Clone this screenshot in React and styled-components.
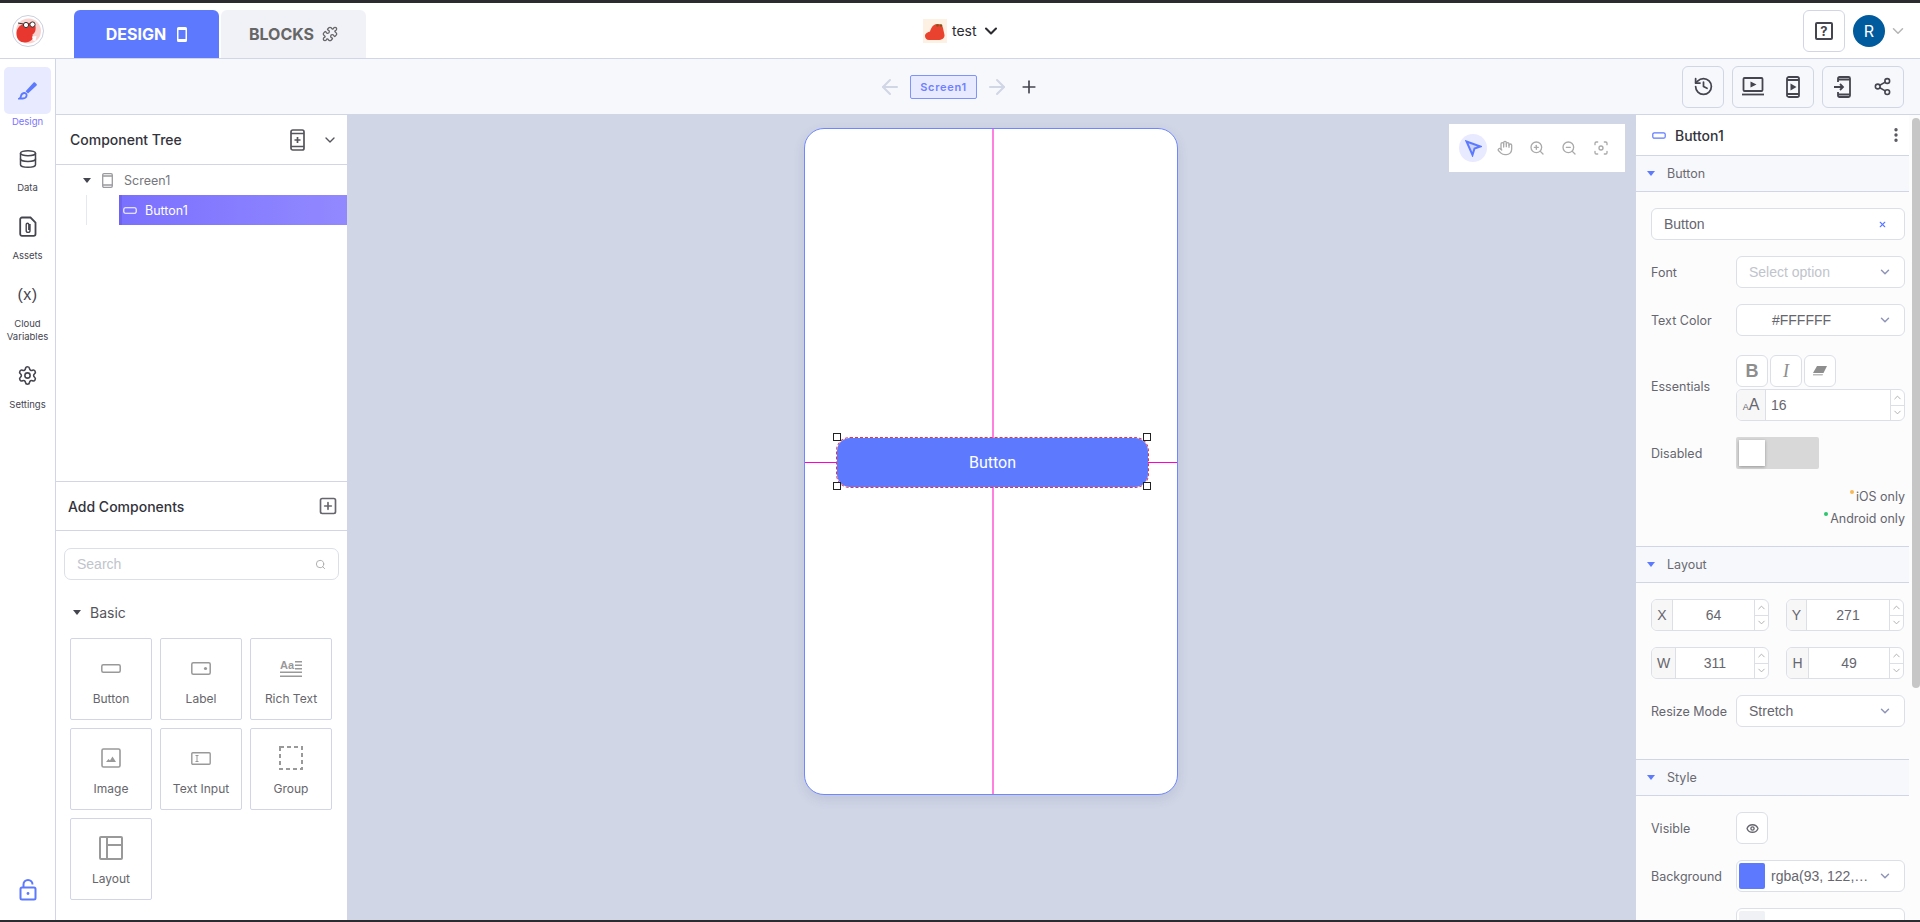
import React from 'react';
import styled, {createGlobalStyle} from 'styled-components';
import {
    ArrowLeft, ArrowRight, ChevronDown, ChevronUp, Database, EllipsisVertical, Eye, Focus, Hand, History,
    Plus, Puzzle, Search, Settings, Share2, SquarePlus, X, ZoomIn, ZoomOut
} from 'lucide-react';

const GlobalStyle = createGlobalStyle`
  html, body { margin: 0; padding: 0; height: 100%; overflow: hidden; background: #fff; }
  * { box-sizing: border-box; }
  body { font-family: "Inter", "Liberation Sans", sans-serif; color: #3c3c46; }
`;

/* little drawings that the icon packages don't have */
const BrushIcon = () => (
    <svg width="20" height="20" viewBox="0 0 20 20" fill="#5d7aff">
        <path d="M17 1.500l1.600 1.600c.4.4.4 1 0 1.400L10 12.600 7.600 10.200 15.600 1.500c.4-.4 1-.4 1.400 0z"/>
        <path d="M6 12c1.500-.2 2.800 1 2.600 2.500-.2 1.800-2 3-3.800 3H1.500c1-.6 1.300-1.400 1.500-2.500.3-1.600 1.500-2.800 3-3z" fill="none" stroke="#5d7aff" strokeWidth="1.800"/>
    </svg>
);
const AssetIcon = () => (
    <svg width="18" height="21" viewBox="0 0 18 21" fill="none" stroke="#45454f" strokeWidth="1.800">
        <path d="M3 1.500h8.500l5 5V18a1.800 1.800 0 0 1-1.800 1.800H3A1.800 1.800 0 0 1 1.200 18V3.300A1.800 1.800 0 0 1 3 1.500z"/>
        <path d="M11 8v6.500a1.900 1.900 0 0 1-3.800 0V8.500a1.300 1.300 0 0 1 2.600 0V14" strokeWidth="1.400"/>
    </svg>
);
const LockIcon = () => (
    <svg width="18" height="22" viewBox="0 0 18 22" fill="none" stroke="#5d7aff" strokeWidth="2">
        <rect x="1.500" y="8.500" width="15" height="12" rx="1.500"/>
        <path d="M4.500 8V5.500a4.500 4.500 0 0 1 9 0"/>
        <circle cx="9" cy="14.500" r="1.400" fill="#5d7aff" stroke="none"/>
    </svg>
);
const Logo = () => (
    <svg width="32" height="32" viewBox="0 0 32 32">
        <circle cx="16" cy="16" r="15.500" fill="#fff" stroke="#c9cfe0"/>
        <circle cx="16.500" cy="16" r="12.500" fill="#f8d3d0"/>
        <path d="M4.500 19c0-6 3.500-9 7-10 3-1 6.500-1.500 10-1 2 1.500 2.500 4 2 7-.4 2-1.500 3.500-3 4.500l.5 4c-2 2.500-5 4-8 4-5 0-8.500-3.500-8.500-8.500z" fill="#e8372f"/>
        <circle cx="14" cy="10" r="2.600" fill="#fff" stroke="#333" strokeWidth="1"/>
        <circle cx="20.500" cy="9.500" r="2.600" fill="#fff" stroke="#333" strokeWidth="1"/>
        <path d="M6 8l5.500 1" stroke="#333" strokeWidth="1"/>
        <path d="M20 21.500l4.500-.5-1 5-2.500-.5z" fill="#fff"/>
    </svg>
);
const ProjectLogo = () => (
    <svg width="24" height="24" viewBox="0 0 24 24">
        <rect width="24" height="24" fill="#fdf1e4"/>
        <path d="M2 17c0-2.500 3-4 5-4.500 1-3 2.500-7 7-7.500 3.500-.3 5.500 1 6 4l1.500 7c.3 3-2.500 5-6.500 5H6c-2.500 0-4-2-4-4z" fill="#e9432f"/>
        <circle cx="14.500" cy="6.500" r="1.300" fill="#7a5a1c"/>
        <circle cx="18" cy="6.500" r="1.300" fill="#7a5a1c"/>
    </svg>
);
const DesignTabIcon = () => (
    <svg width="10" height="15" viewBox="0 0 10 15">
        <path fillRule="evenodd" fill="#fff" d="M1.500 0h7A1.500 1.500 0 0 1 10 1.500v12A1.500 1.500 0 0 1 8.500 15h-7A1.500 1.500 0 0 1 0 13.500v-12A1.500 1.500 0 0 1 1.500 0zM1.500 3v9h7V3z"/>
    </svg>
);
const PhoneOutline = ({color = '#9a9a9f'}) => (
    <svg width="11" height="15" viewBox="0 0 11 15" fill="none" stroke={color} strokeWidth="1.300">
        <rect x=".7" y=".7" width="9.600" height="13.600" rx="1.300"/>
        <path d="M1 3h9M1 12h9"/>
    </svg>
);
const PhonePlus = () => (
    <svg width="15" height="22" viewBox="0 0 15 22" fill="none" stroke="#55555c" strokeWidth="1.700">
        <rect x="1" y="1" width="13" height="20" rx="1.800"/>
        <path d="M1 4.500h13M1 17.500h13M7.500 8v6M4.500 11h6"/>
    </svg>
);
const ButtonGlyph = ({color = '#999', w = 20, h = 9, stroke = 1.500}) => (
    <svg width={w} height={h} viewBox={`0 0 ${w} ${h}`} fill="none" stroke={color} strokeWidth={stroke}>
        <rect x=".8" y=".8" width={w - 1.600} height={h - 1.600} rx="1.500"/>
    </svg>
);
const LabelGlyph = () => (
    <svg width="20" height="13" viewBox="0 0 20 13" fill="none" stroke="#999" strokeWidth="1.500">
        <rect x=".8" y=".8" width="18.400" height="11.400" rx="1.500"/>
        <circle cx="14.500" cy="6.500" r="1.600" fill="#999" stroke="none"/>
    </svg>
);
const RichTextGlyph = () => (
    <svg width="22" height="19" viewBox="0 0 22 19" fill="#999">
        <text x="0" y="10" fontFamily="Liberation Sans" fontSize="11" fontWeight="700">Aa</text>
        <path d="M15 2h7v1.500h-7zM15 5.500h7V7h-7zM15 9h7v1.500h-7zM0 12.500h22V14H0zM0 16.500h22V18H0z"/>
    </svg>
);
const ImageGlyph = () => (
    <svg width="20" height="20" viewBox="0 0 20 20" fill="none" stroke="#999" strokeWidth="1.600">
        <rect x="1" y="1" width="18" height="18" rx="1.500"/>
        <path d="M5 14l2.500-3 1.500 1.500 2.500-4 3.500 5.500z" fill="#999" stroke="none"/>
    </svg>
);
const InputGlyph = () => (
    <svg width="20" height="13" viewBox="0 0 20 13" fill="none" stroke="#999" strokeWidth="1.400">
        <rect x=".8" y=".8" width="18.400" height="11.400" rx="1"/>
        <path d="M4.500 3.500h3M4.500 9.500h3M6 3.500v6" strokeWidth="1"/>
    </svg>
);
const GroupGlyph = () => (
    <svg width="24" height="24" viewBox="0 0 24 24" fill="none" stroke="#999" strokeWidth="2" strokeDasharray="4 3">
        <rect x="1" y="1" width="22" height="22"/>
    </svg>
);
const LayoutGlyph = () => (
    <svg width="24" height="24" viewBox="0 0 24 24" fill="none" stroke="#999" strokeWidth="2">
        <rect x="1" y="1" width="22" height="22" rx="1"/>
        <path d="M8 1v22M8 9h15"/>
    </svg>
);
const LaptopPlay = () => (
    <svg width="22" height="19" viewBox="0 0 22 19" fill="none" stroke="#45454f" strokeWidth="1.800">
        <rect x="1.500" y="1" width="19" height="13" rx="1"/>
        <path d="M0 17.500h22"/>
        <path d="M8.500 4.500l6 3-6 3z" fill="#45454f" stroke="none"/>
    </svg>
);
const PhonePlay = () => (
    <svg width="14" height="22" viewBox="0 0 14 22" fill="none" stroke="#45454f" strokeWidth="1.800">
        <rect x="1" y="1" width="12" height="20" rx="1.800"/>
        <path d="M1 4h12M1 18h12"/>
        <path d="M4.500 7.500l6 3.500-6 3.500z" fill="#45454f" stroke="none"/>
    </svg>
);
const PhoneImport = () => (
    <svg width="17" height="22" viewBox="0 0 17 22" fill="none" stroke="#45454f" strokeWidth="1.800">
        <path d="M4 6V2.500A1.500 1.500 0 0 1 5.500 1h9A1.500 1.500 0 0 1 16 2.500v17a1.500 1.500 0 0 1-1.500 1.500h-9A1.500 1.500 0 0 1 4 19.500V16"/>
        <path d="M4 3.500h12M4 18.500h12M0 11h9M6 8l3 3-3 3"/>
    </svg>
);
const EraserGlyph = () => (
    <svg width="14" height="10" viewBox="0 0 14 10" fill="#8e8e8e">
        <path d="M4 0h10l-3.500 7H0z"/>
        <path d="M0 8h10l-.5 1.500H0z" fill="#bbb"/>
    </svg>
);

const AppWrapper = styled.div`
  height: 100vh;
  display: flex;
  flex-direction: column;
  border-top: 3px solid #2b2b30;
  border-bottom: 2px solid #2b2b30;
  overflow: hidden;
`;
const TopBar = styled.header`
  height: 56px;
  flex: none;
  display: flex;
  align-items: center;
  padding-left: 12px;
  padding-right: 13px;
  border-bottom: 1px solid #d0d6e6;
  background: #fff;
`;
const Tabs = styled.div`
  display: flex;
  gap: 2px;
  margin-left: 30px;
  align-self: flex-end;
`;
const Tab = styled.div`
  width: 145px;
  height: 48px;
  display: flex;
  align-items: center;
  justify-content: center;
  gap: ${props => (props.$active ? 11 : 8)}px;
  font-size: 16px;
  font-weight: 700;
  border-radius: 6px 6px 0 0;
  background: ${props => (props.$active ? '#5d7aff' : '#f1f2f8')};
  color: ${props => (props.$active ? '#fff' : '#666')};
`;
const Project = styled.div`
  display: flex;
  align-items: center;
  margin-left: 557px;
  font-size: 14px;
  color: #2b2b30;
  span { margin: 0 4px 0 5px; }
`;
const TopRight = styled.div`
  margin-left: auto;
  display: flex;
  align-items: center;
`;
const IconBox = styled.div`
  height: 42px;
  width: ${props => props.$width || 42}px;
  display: flex;
  align-items: center;
  justify-content: ${props => (props.$pl ? 'space-between' : 'center')};
  padding: 0 ${props => props.$pr || 0}px 0 ${props => props.$pl || 0}px;
  border: 1px solid #d0d6e6;
  border-radius: 6px;
`;
const HelpBox = styled.div`
  width: 18px;
  height: 18px;
  border: 2px solid #45454f;
  border-radius: 2px;
  display: flex;
  align-items: center;
  justify-content: center;
  font-size: 13px;
  font-weight: 700;
  color: #45454f;
`;
const Avatar = styled.div`
  width: 32px;
  height: 32px;
  margin-left: 8px;
  border-radius: 50%;
  background: #005a9e;
  color: #fff;
  font-size: 16px;
  display: flex;
  align-items: center;
  justify-content: center;
`;
const AvatarCaret = styled.div`
  margin-left: 4px;
  display: flex;
`;
const Body = styled.div`
  flex: 1;
  min-height: 0;
  display: flex;
`;
const SideNav = styled.nav`
  width: 56px;
  flex: none;
  display: flex;
  flex-direction: column;
  align-items: center;
  padding-top: 8px;
  border-right: 1px solid #d0d6e6;
`;
const NavItem = styled.div`
  width: 100%;
  height: ${props => props.$h || 68}px;
  display: flex;
  flex-direction: column;
  align-items: center;
  font-size: 9.500px;
  line-height: 13px;
  text-align: center;
  color: #45454f;
`;
const NavIcon = styled.div`
  width: 47px;
  height: 47px;
  margin-bottom: 1px;
  flex: none;
  display: flex;
  align-items: center;
  justify-content: center;
  border-radius: 5px;
  background: ${props => (props.$active ? '#e8eaff' : 'transparent')};
`;
const NavText = styled.div`
  color: ${props => (props.$active ? '#7b73ff' : '#45454f')};
  margin-top: ${props => (props.$active ? 0 : -2)}px;
`;
const VarIcon = styled.span`
  font-family: "Liberation Sans", sans-serif;
  font-size: 16px;
  font-weight: 400;
  letter-spacing: .5px;
  color: #45454f;
`;
const LockSlot = styled.div`
  margin-top: auto;
  margin-bottom: 19px;
  display: flex;
`;
const Main = styled.div`
  flex: 1;
  min-width: 0;
  display: flex;
  flex-direction: column;
`;
const ToolBar = styled.div`
  height: 56px;
  flex: none;
  display: flex;
  align-items: center;
  padding-left: 822px;
  padding-right: 16px;
  background: #f7f8fb;
  border-bottom: 1px solid #d0d6e6;
`;
const ScreenChip = styled.div`
  height: 24px;
  width: 67px;
  margin: 0 8px;
  display: flex;
  align-items: center;
  justify-content: center;
  font-size: 11px;
  font-weight: 600;
  letter-spacing: .7px;
  color: #6f80ff;
  background: #e8eaff;
  border: 1px solid #7f93ff;
  border-radius: 2px;
`;
const AddScreen = styled.div`
  margin-left: 10px;
  display: flex;
`;
const ToolGroups = styled.div`
  margin-left: auto;
  display: flex;
  gap: 8px;
`;
const Workspace = styled.div`
  flex: 1;
  min-height: 0;
  display: flex;
`;
const LeftPanel = styled.aside`
  width: 291px;
  flex: none;
  display: flex;
  flex-direction: column;
  background: #fff;
`;
const TreeArea = styled.div`
  height: 367px;
  flex: none;
  border-bottom: 1px solid #d0d6e6;
`;
const PanelHead = styled.div`
  height: ${props => props.$h}px;
  display: flex;
  align-items: center;
  justify-content: space-between;
  padding: 0 ${props => props.$pr}px 0 ${props => props.$pl}px;
  border-bottom: 1px solid #d0d6e6;
  font-size: 14px;
  font-weight: 500;
  color: #33333b;
`;
const HeadIcons = styled.div`
  display: flex;
  align-items: center;
  gap: 17px;
`;
const TreeRow = styled.div`
  height: 30px;
  display: flex;
  align-items: center;
  font-size: 12.500px;
  margin-left: ${props => props.$indent}px;
  padding-left: ${props => props.$pad}px;
  color: ${props => (props.$selected ? '#fff' : '#77777d')};
  background: ${props => (props.$selected ? 'linear-gradient(90deg, #7a70ff, #9289ff)' : 'none')};
  border-left: ${props => (props.$selected ? '3px solid #6e63f0' : 'none')};
  gap: ${props => props.$gap}px;
  position: relative;
`;
const TreeGuide = styled.div`
  position: absolute;
  left: -36px;
  top: 0;
  bottom: 0;
  width: 1px;
  background: #e6e8f0;
`;
const Caret = styled.div`
  width: 0;
  height: 0;
  border-left: 4px solid transparent;
  border-right: 4px solid transparent;
  border-top: 5px solid ${props => props.$color || '#45454f'};
`;
const AddBody = styled.div`
  flex: 1;
  padding: 17px 8px 0 8px;
`;
const SearchBox = styled.div`
  height: 32px;
  display: flex;
  align-items: center;
  justify-content: space-between;
  padding: 0 12px;
  border: 1px solid #dcdfe6;
  border-radius: 7px;
  font-family: "Liberation Sans", sans-serif;
  font-size: 14px;
  color: #c0c4cc;
`;
const BasicHead = styled.div`
  margin: 23px 0 17px 9px;
  height: 18px;
  display: flex;
  align-items: center;
  gap: 9px;
  font-size: 14px;
  color: #55555c;
`;
const TileGrid = styled.div`
  display: grid;
  grid-template-columns: repeat(3, 82px);
  grid-auto-rows: 82px;
  gap: 8px;
  margin-left: 6px;
`;
const Tile = styled.div`
  display: flex;
  flex-direction: column;
  align-items: center;
  border: 1px solid #d0d6e6;
  border-radius: 2px;
  font-size: 12px;
  color: #66666c;
`;
const TileIcon = styled.div`
  height: 52px;
  flex: none;
  display: flex;
  align-items: center;
  justify-content: center;
  padding-top: 6px;
`;
const Canvas = styled.main`
  flex: 1;
  min-width: 0;
  position: relative;
  display: flex;
  justify-content: center;
  align-items: flex-start;
  padding-top: 13px;
  background: #d0d6e6;
`;
const ViewTools = styled.div`
  position: absolute;
  top: 9px;
  right: 10px;
  width: 176px;
  height: 48px;
  display: flex;
  align-items: center;
  gap: 4px;
  padding-left: 10px;
  background: #fff;
`;
const ViewTool = styled.div`
  width: 28px;
  height: 28px;
  display: flex;
  align-items: center;
  justify-content: center;
  border-radius: 50%;
  background: ${props => (props.$active ? '#e8eaff' : 'none')};
`;
const PhoneFrame = styled.div`
  position: relative;
  width: 374px;
  height: 667px;
  background: #fff;
  border: 1px solid #7088ff;
  border-radius: 20px;
  box-shadow: 0 4px 12px rgba(60, 70, 110, .12);
`;
const GuideV = styled.div`
  position: absolute;
  left: 187px;
  top: 0;
  bottom: 0;
  width: 2px;
  background: #ff80e0;
`;
const GuideH = styled.div`
  position: absolute;
  left: 0;
  right: 0;
  top: 333px;
  height: 1px;
  background: #ff00d0;
`;
const CanvasButton = styled.div`
  position: absolute;
  left: 32px;
  top: 309px;
  width: 311px;
  height: 49px;
  display: flex;
  align-items: center;
  justify-content: center;
  font-family: "Roboto", sans-serif;
  font-size: 16px;
  color: #fff;
  background: #5d7aff;
  border-radius: 13px;
  outline: 1px dashed #e8324a;
`;
const Handle = styled.div`
  position: absolute;
  width: 8px;
  height: 8px;
  background: #fff;
  border: 1px solid #222;
  left: ${props => (props.$right ? 'calc(100% - 5px)' : '-4px')};
  top: ${props => (props.$bottom ? 'calc(100% - 5px)' : '-5px')};
`;
const RightPanel = styled.aside`
  width: 285px;
  flex: none;
  display: flex;
  background: #fcfcfd;
  border-left: 1px solid #d0d6e6;
  overflow: hidden;
`;
const Props = styled.div`
  width: 273px;
  flex: none;
`;
const ScrollTrack = styled.div`
  width: 8px;
  margin-left: 3px;
  padding-top: 3px;
  flex: none;
`;
const ScrollThumb = styled.div`
  height: 570px;
  background: #c6c6c6;
  border-radius: 4px;
`;
const CompHead = styled.div`
  height: 41px;
  display: flex;
  align-items: center;
  gap: 9px;
  padding-left: 16px;
  background: #fff;
  border-bottom: 1px solid #d0d6e6;
  font-size: 14px;
  font-weight: 500;
  color: #33333b;
  svg:last-child { margin-left: auto; margin-right: 4px; }
`;
const SectionHead = styled.div`
  height: ${props => props.$first ? 36 : 37}px;
  display: flex;
  align-items: center;
  gap: 12px;
  padding-left: 11px;
  padding-bottom: ${props => props.$first ? 0 : 1}px;
  background: #f7f8fb;
  border-bottom: 1px solid #d0d6e6;
  border-top: ${props => (props.$first ? 'none' : '1px solid #d0d6e6')};
  font-size: 12.500px;
  color: #6a6a72;
`;
const Section = styled.div`
  padding: 16px 4px 0 15px;
  height: ${props => props.$h}px;
  display: flex;
  flex-direction: column;
  gap: 16px;
`;
const Row = styled.div`
  display: flex;
  align-items: center;
  min-height: 32px;
`;
const RowLabel = styled.div`
  width: 85px;
  flex: none;
  font-size: 12.500px;
  color: #66666e;
`;
const Field = styled.div`
  height: 32px;
  flex: 1;
  min-width: 0;
  display: flex;
  align-items: center;
  justify-content: space-between;
  padding: 0 ${props => props.$pr || 12}px 0 ${props => props.$pl || 12}px;
  background: #fff;
  border: 1px solid #dcdfe6;
  border-radius: 6px;
  font-family: "Liberation Sans", sans-serif;
  font-size: 14px;
  color: ${props => (props.$muted ? '#c0c4cc' : '#66666e')};
`;
const CenterValue = styled.div`
  flex: 1;
  text-align: center;
  padding-right: 24px;
`;
const Essentials = styled.div`
  flex: 1;
  display: flex;
  flex-direction: column;
  gap: 2px;
  margin-top: 3px;
`;
const SquareBtns = styled.div`
  display: flex;
  gap: 2px;
`;
const SquareBtn = styled.div`
  width: 32px;
  height: 32px;
  display: flex;
  align-items: center;
  justify-content: center;
  background: #fff;
  border: 1px solid #dcdfe6;
  border-radius: 6px;
  font-family: ${props => (props.$italic ? '"Liberation Serif", serif' : '"Liberation Sans", sans-serif')};
  font-size: 18px;
  color: #8e8e8e;
  font-weight: ${props => (props.$bold ? 700 : 400)};
  font-style: ${props => (props.$italic ? 'italic' : 'normal')};
`;
const NumberBox = styled.div`
  height: 32px;
  flex: none;
  display: flex;
  align-items: stretch;
  background: #fff;
  border: 1px solid #dcdfe6;
  border-radius: 6px;
  overflow: hidden;
  font-family: "Liberation Sans", sans-serif;
  font-size: 14px;
  color: #66666e;
`;
const Addon = styled.div`
  width: ${props => props.$w}px;
  flex: none;
  display: flex;
  align-items: center;
  justify-content: center;
  background: #f7f7f7;
  border-right: 1px solid #dcdfe6;
  small { font-size: 9px; margin-top: 4px; }
  b { font-weight: 400; font-size: 16px; }
`;
const NumValue = styled.div`
  flex: 1;
  display: flex;
  align-items: center;
  justify-content: ${props => (props.$left ? 'flex-start' : 'center')};
  padding-left: ${props => (props.$left ? 5 : 0)}px;
`;
const Stepper = styled.div`
  width: 14px;
  flex: none;
  display: flex;
  flex-direction: column;
  border-left: 1px solid #dcdfe6;
  div {
    flex: 1;
    display: flex;
    align-items: center;
    justify-content: center;
  }
  div + div { border-top: 1px solid #dcdfe6; }
`;
const Toggle = styled.div`
  width: 83px;
  height: 32px;
  padding: 3px;
  background: #d8d8d8;
  border-radius: 2px;
`;
const Knob = styled.div`
  width: 26px;
  height: 26px;
  background: #fff;
  box-shadow: 0 1px 3px rgba(0, 0, 0, .3);
`;
const Notes = styled.div`
  display: flex;
  flex-direction: column;
  gap: 9px;
  align-items: flex-end;
  font-size: 12.500px;
  line-height: 13px;
  margin-top: 5px;
  color: #66666e;
`;
const Note = styled.div`
  position: relative;
  &::before {
    content: "";
    position: absolute;
    left: -6px;
    top: 0;
    width: 4px;
    height: 4px;
    border-radius: 50%;
    background: ${props => props.$dot};
  }
`;
const PairRow = styled.div`
  display: grid;
  grid-template-columns: 118px 118px;
  gap: 17px;
`;
const Swatch = styled.div`
  width: 26px;
  height: 26px;
  flex: none;
  background: ${props => props.$color};
  border-radius: 2px;
`;
const SwatchText = styled.div`
  flex: 1;
  min-width: 0;
  margin: 0 8px 0 6px;
  white-space: nowrap;
`;

const Spin = () => (
    <Stepper>
        <div><ChevronUp size={11} color="#aaa"/></div>
        <div><ChevronDown size={11} color="#aaa"/></div>
    </Stepper>
);
const NumField = ({label, value, w = 21}) => (
    <NumberBox>
        <Addon $w={w}>{label}</Addon>
        <NumValue>{value}</NumValue>
        <Spin/>
    </NumberBox>
);
const SelectCaret = () => <ChevronDown size={14} color="#8f95b8" strokeWidth={2.500}/>;

const tiles = [
    {name: 'Button', icon: <ButtonGlyph/>},
    {name: 'Label', icon: <LabelGlyph/>},
    {name: 'Rich Text', icon: <RichTextGlyph/>},
    {name: 'Image', icon: <ImageGlyph/>},
    {name: 'Text Input', icon: <InputGlyph/>},
    {name: 'Group', icon: <GroupGlyph/>},
    {name: 'Layout', icon: <LayoutGlyph/>},
];

const App = () => {
    return (
        <AppWrapper>
            <GlobalStyle/>
            <TopBar>
                <Logo/>
                <Tabs>
                    <Tab $active>DESIGN <DesignTabIcon/></Tab>
                    <Tab>BLOCKS <Puzzle size={16} color="#666"/></Tab>
                </Tabs>
                <Project>
                    <ProjectLogo/>
                    <span>test</span>
                    <ChevronDown size={20} strokeWidth={2.500} color="#2b2b30"/>
                </Project>
                <TopRight>
                    <IconBox><HelpBox>?</HelpBox></IconBox>
                    <Avatar>R</Avatar>
                    <AvatarCaret><ChevronDown size={18} color="#b5b5b5"/></AvatarCaret>
                </TopRight>
            </TopBar>
            <Body>
                <SideNav>
                    <NavItem $active $h={68}>
                        <NavIcon $active><BrushIcon/></NavIcon>
                        <NavText $active>Design</NavText>
                    </NavItem>
                    <NavItem>
                        <NavIcon><Database size={20} color="#45454f" strokeWidth={1.800}/></NavIcon>
                        <NavText>Data</NavText>
                    </NavItem>
                    <NavItem>
                        <NavIcon><AssetIcon/></NavIcon>
                        <NavText>Assets</NavText>
                    </NavItem>
                    <NavItem $h={81}>
                        <NavIcon><VarIcon>(x)</VarIcon></NavIcon>
                        <NavText>Cloud<br/>Variables</NavText>
                    </NavItem>
                    <NavItem>
                        <NavIcon><Settings size={21} color="#45454f" strokeWidth={1.800}/></NavIcon>
                        <NavText>Settings</NavText>
                    </NavItem>
                    <LockSlot><LockIcon/></LockSlot>
                </SideNav>
                <Main>
                    <ToolBar>
                        <ArrowLeft size={24} color="#d0d6e6"/>
                        <ScreenChip>Screen1</ScreenChip>
                        <ArrowRight size={24} color="#d0d6e6"/>
                        <AddScreen><Plus size={20} color="#45454f"/></AddScreen>
                        <ToolGroups>
                            <IconBox><History size={21} color="#45454f"/></IconBox>
                            <IconBox $width={82} $pl={9} $pr={13}><LaptopPlay/><PhonePlay/></IconBox>
                            <IconBox $width={82} $pl={11} $pr={11}><PhoneImport/><Share2 size={19} color="#45454f"/></IconBox>
                        </ToolGroups>
                    </ToolBar>
                    <Workspace>
                        <LeftPanel>
                            <TreeArea>
                                <PanelHead $h={50} $pl={14} $pr={9}>
                                    Component Tree
                                    <HeadIcons>
                                        <PhonePlus/>
                                        <ChevronDown size={16} color="#55555c"/>
                                    </HeadIcons>
                                </PanelHead>
                                <TreeRow $indent={27} $pad={0} $gap={11}>
                                    <Caret/>
                                    <PhoneOutline/>
                                    Screen1
                                </TreeRow>
                                <TreeRow $selected $indent={63} $pad={1} $gap={8}>
                                    <TreeGuide/>
                                    <ButtonGlyph color="#fff" w={14} h={7} stroke={1.100}/>
                                    Button1
                                </TreeRow>
                            </TreeArea>
                            <PanelHead $h={49} $pl={12} $pr={9}>
                                Add Components
                                <SquarePlus size={20} color="#66666c"/>
                            </PanelHead>
                            <AddBody>
                                <SearchBox>
                                    Search
                                    <Search size={11} color="#aaa"/>
                                </SearchBox>
                                <BasicHead><Caret/>Basic</BasicHead>
                                <TileGrid>
                                    {tiles.map(item => {
                                        return (
                                            <Tile key={item.name}>
                                                <TileIcon>{item.icon}</TileIcon>
                                                {item.name}
                                            </Tile>
                                        )
                                    })}
                                </TileGrid>
                            </AddBody>
                        </LeftPanel>
                        <Canvas>
                            <ViewTools>
                                <ViewTool $active>
                                    <svg width="17" height="17" viewBox="0 0 17 17" fill="#cdd4ff" stroke="#5d7aff" strokeWidth="2">
                                        <path d="M1.500 1.500l14 5-6 2-2 6.500z"/>
                                    </svg>
                                </ViewTool>
                                <ViewTool><Hand size={16} color="#aaa"/></ViewTool>
                                <ViewTool><ZoomIn size={16} color="#aaa"/></ViewTool>
                                <ViewTool><ZoomOut size={16} color="#aaa"/></ViewTool>
                                <ViewTool><Focus size={16} color="#aaa"/></ViewTool>
                            </ViewTools>
                            <PhoneFrame>
                                <GuideV/>
                                <GuideH/>
                                <CanvasButton>
                                    Button
                                    <Handle/>
                                    <Handle $right/>
                                    <Handle $bottom/>
                                    <Handle $right $bottom/>
                                </CanvasButton>
                            </PhoneFrame>
                        </Canvas>
                        <RightPanel>
                            <Props>
                                <CompHead>
                                    <ButtonGlyph color="#5d7aff" w={14} h={7} stroke={1.200}/>
                                    Button1
                                    <EllipsisVertical size={18} color="#55555c" strokeWidth={2.500}/>
                                </CompHead>
                                <SectionHead $first><Caret $color="#5d7aff"/>Button</SectionHead>
                                <Section $h={354}>
                                    <Row>
                                        <Field $pl={12} $pr={17}>
                                            Button
                                            <X size={9} color="#5d7aff" strokeWidth={3}/>
                                        </Field>
                                    </Row>
                                    <Row>
                                        <RowLabel>Font</RowLabel>
                                        <Field $muted>Select option<SelectCaret/></Field>
                                    </Row>
                                    <Row>
                                        <RowLabel>Text Color</RowLabel>
                                        <Field>
                                            <CenterValue>#FFFFFF</CenterValue>
                                            <SelectCaret/>
                                        </Field>
                                    </Row>
                                    <Row>
                                        <RowLabel>Essentials</RowLabel>
                                        <Essentials>
                                            <SquareBtns>
                                                <SquareBtn $bold>B</SquareBtn>
                                                <SquareBtn $italic>I</SquareBtn>
                                                <SquareBtn><EraserGlyph/></SquareBtn>
                                            </SquareBtns>
                                            <NumberBox>
                                                <Addon $w={29}><small>A</small><b>A</b></Addon>
                                                <NumValue $left>16</NumValue>
                                                <Spin/>
                                            </NumberBox>
                                        </Essentials>
                                    </Row>
                                    <Row>
                                        <RowLabel>Disabled</RowLabel>
                                        <Toggle><Knob/></Toggle>
                                    </Row>
                                    <Notes>
                                        <Note $dot="#f7b955">iOS only</Note>
                                        <Note $dot="#2ec56c">Android only</Note>
                                    </Notes>
                                </Section>
                                <SectionHead><Caret $color="#5d7aff"/>Layout</SectionHead>
                                <Section $h={176}>
                                    <PairRow>
                                        <NumField label="X" value="64"/>
                                        <NumField label="Y" value="271" w={20}/>
                                    </PairRow>
                                    <PairRow>
                                        <NumField label="W" value="311" w={24}/>
                                        <NumField label="H" value="49" w={22}/>
                                    </PairRow>
                                    <Row>
                                        <RowLabel>Resize Mode</RowLabel>
                                        <Field>Stretch<SelectCaret/></Field>
                                    </Row>
                                </Section>
                                <SectionHead><Caret $color="#5d7aff"/>Style</SectionHead>
                                <Section $h={130}>
                                    <Row>
                                        <RowLabel>Visible</RowLabel>
                                        <SquareBtn><Eye size={13} color="#66666e" strokeWidth={2.500}/></SquareBtn>
                                    </Row>
                                    <Row>
                                        <RowLabel>Background</RowLabel>
                                        <Field $pl={2}>
                                            <Swatch $color="#5d7aff"/>
                                            <SwatchText>rgba(93, 122,…</SwatchText>
                                            <SelectCaret/>
                                        </Field>
                                    </Row>
                                    <Row>
                                        <RowLabel/>
                                        <Field $pl={2}><Swatch $color="#f0f1f5"/></Field>
                                    </Row>
                                </Section>
                            </Props>
                            <ScrollTrack><ScrollThumb/></ScrollTrack>
                        </RightPanel>
                    </Workspace>
                </Main>
            </Body>
        </AppWrapper>
    );
};

export default App;
